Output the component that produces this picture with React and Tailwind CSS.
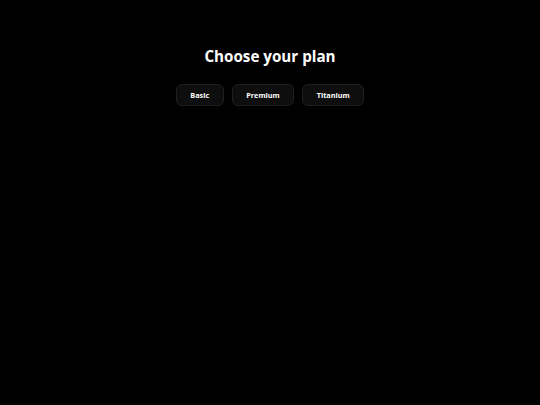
export default function App() {
  const plans = ["Basic", "Premium", "Titanium"];
  return (
    <div className="min-h-[405px] w-full bg-black flex flex-col items-center pt-[45px] font-['Open_Sans',sans-serif]">
      <h1 className="text-white font-bold text-[15.2px] leading-[22px]">Choose your plan</h1>
      <div className="flex gap-[8px] mt-[17px]">
        {plans.map((p) => (
          <button
            key={p}
            className="h-[22px] px-[13.5px] rounded-[6px] bg-[#0e0e0e] border border-[#1f1f1f] text-white text-[7.3px] font-bold leading-none pt-px"
          >
            {p}
          </button>
        ))}
      </div>
    </div>
  );
}
